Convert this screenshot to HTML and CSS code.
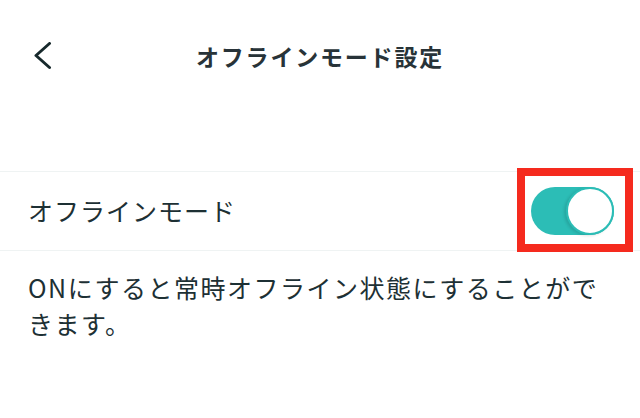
FILE: index.html
```html
<!DOCTYPE html>
<html lang="ja">
<head>
<meta charset="utf-8">
<title>オフラインモード設定</title>
<link rel="stylesheet" href="styles.css">
</head>
<body>
<header class="header">
  <button class="back" aria-label="戻る">
    <svg width="20" height="28" viewBox="0 0 20 28"><polyline points="16.5,1.5 3,13.5 16.5,25.5" fill="none" stroke="#17292c" stroke-width="3" stroke-linecap="round" stroke-linejoin="round"/></svg>
  </button>
  <h1 class="title">オフラインモード設定</h1>
  <span></span>
</header>
<main>
  <div class="row">
    <span class="label">オフラインモード</span>
    <span class="toggle highlighted"><span class="knob"></span></span>
  </div>
  <p class="desc">ONにすると常時オフライン状態にすることができます。</p>
</main>
</body>
</html>
```
FILE: styles.css
```css
* { box-sizing: border-box; }
body {
  margin: 0;
  background: #fff;
  font-family: "Noto Sans CJK JP", "Noto Sans", sans-serif;
  color: #1d3034;
}
.header {
  height: 112px;
  display: grid;
  grid-template-columns: 1fr auto 1fr;
  align-items: center;
}
.back {
  justify-self: start;
  margin-left: 33px;
  padding: 0;
  border: 0;
  background: none;
  display: flex;
}
.title {
  margin: 0;
  font-size: 23px;
  font-weight: 700;
  letter-spacing: 1.8px;
  color: #283338;
}
main { margin-top: 59px; }
.row {
  height: 80px;
  border-top: 1px solid #eff3f3;
  border-bottom: 1px solid #eff3f3;
  display: flex;
  align-items: center;
  justify-content: space-between;
  padding: 0 26px 0 28px;
}
.label {
  font-size: 25px;
  letter-spacing: 1px;
  margin-top: -2px;
}
.toggle {
  position: relative;
  width: 83px;
  height: 48px;
  border-radius: 24px;
  background: #2cbdb6;
  display: flex;
  justify-content: flex-end;
}
.knob {
  width: 48px;
  height: 48px;
  border-radius: 50%;
  background: #fff;
  border: 2px solid #2cbdb6;
  box-shadow: -2px 1px 3px rgba(0, 0, 0, 0.12);
}
.highlighted::after {
  content: "";
  position: absolute;
  left: -14px;
  right: -19px;
  top: -19px;
  bottom: -17px;
  border: 8px solid #f52a1e;
}
.desc {
  margin: 0;
  padding: 18px 30px 0 28px;
  font-size: 25px;
  line-height: 36px;
  letter-spacing: 1.5px;
}
```
